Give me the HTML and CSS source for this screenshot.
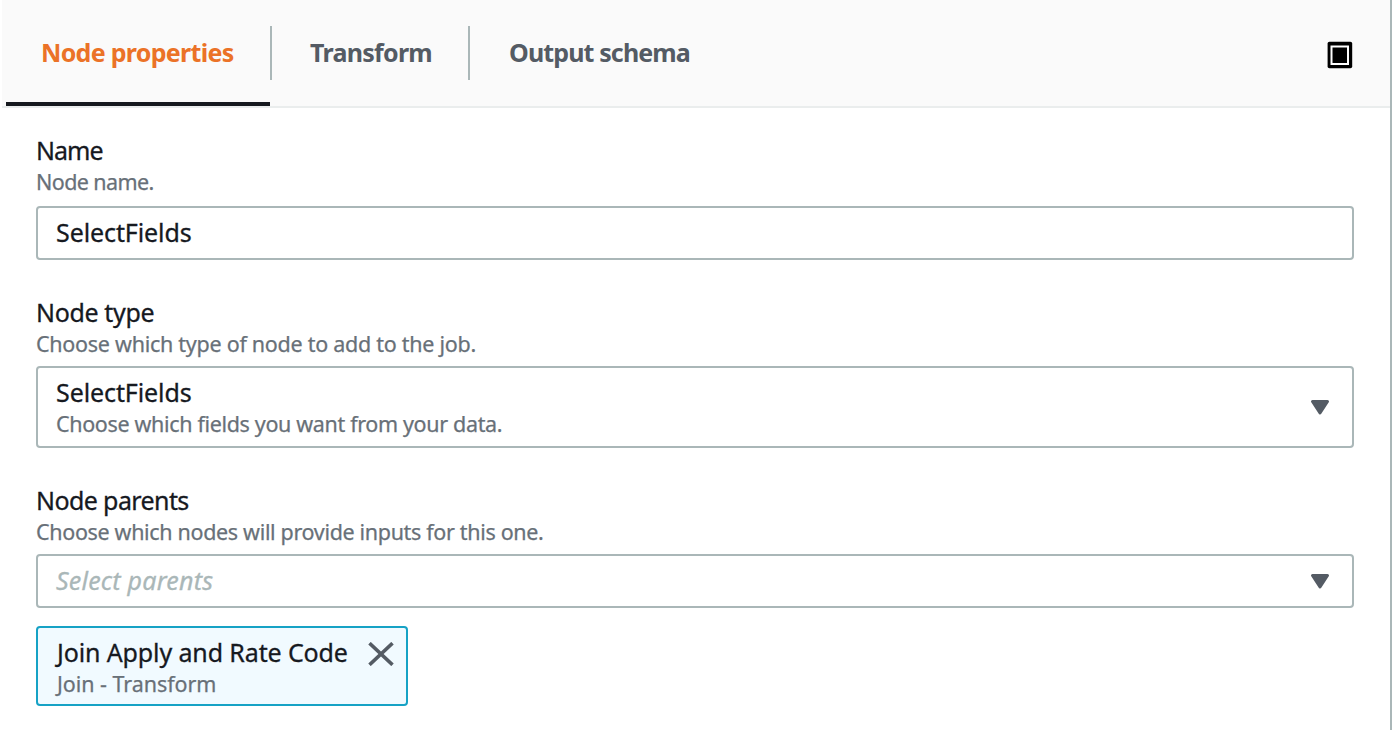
FILE: index.html
```html
<!DOCTYPE html>
<html lang="en">
<head>
<meta charset="utf-8">
<title>Node properties</title>
<link rel="stylesheet" href="styles.css">
</head>
<body>
<main class="panel">
  <header class="tabs">
    <nav class="tab-list">
      <a class="tab tab-active"><span class="tab-text t-props">Node properties</span></a>
      <a class="tab"><span class="tab-text t-transform">Transform</span></a>
      <a class="tab"><span class="tab-text t-schema">Output schema</span></a>
    </nav>
    <svg class="expand" width="26" height="28" viewBox="0 0 26 28">
      <rect x="0.6" y="0.8" width="24.6" height="26.4" rx="1.8" fill="#000"/>
      <rect x="4.5" y="5.5" width="16.5" height="17.5" fill="none" stroke="#fff" stroke-width="2"/>
    </svg>
  </header>
  <section class="form">
    <div class="field field-name">
      <div class="label l-name">Name</div>
      <div class="hint h-name">Node name.</div>
      <div class="box"><span class="value v-select">SelectFields</span></div>
    </div>
    <div class="field">
      <div class="label l-type">Node type</div>
      <div class="hint h-type">Choose which type of node to add to the job.</div>
      <div class="box box-tall">
        <div>
          <div class="value v-select">SelectFields</div>
          <div class="hint h-fields">Choose which fields you want from your data.</div>
        </div>
        <svg class="caret" width="20" height="18" viewBox="0 0 20 18"><path d="M2.5 3.5H17.5L10 15Z" fill="#545b64" stroke="#545b64" stroke-width="3" stroke-linejoin="round"/></svg>
      </div>
    </div>
    <div class="field">
      <div class="label l-parents">Node parents</div>
      <div class="hint h-parents">Choose which nodes will provide inputs for this one.</div>
      <div class="box">
        <span class="value placeholder">Select parents</span>
        <svg class="caret" width="20" height="18" viewBox="0 0 20 18"><path d="M2.5 3.5H17.5L10 15Z" fill="#545b64" stroke="#545b64" stroke-width="3" stroke-linejoin="round"/></svg>
      </div>
      <div class="token">
        <div>
          <div class="value v-join">Join Apply and Rate Code</div>
          <div class="hint h-join">Join - Transform</div>
        </div>
        <svg class="close" width="26" height="24" viewBox="0 0 26 24"><path d="M1.5 1.2L24.5 22.8M24.5 1.2L1.5 22.8" fill="none" stroke="#545b64" stroke-width="3.6"/></svg>
      </div>
    </div>
  </section>
</main>
</body>
</html>
```

FILE: styles.css
```css
* { box-sizing: border-box; }
body {
  margin: 0;
  height: 730px;
  overflow: hidden;
  background: #fff;
  font-family: "Noto Sans", "Open Sans", sans-serif;
  color: #16191f;
}
.panel {
  width: 1390px;
  height: 730px;
  margin-left: 2px;
  border-right: 2px solid #aab7b8;
}
.tabs {
  display: flex;
  justify-content: space-between;
  height: 108px;
  background: #fafafa;
  border-bottom: 2px solid #eaeded;
}
.tab-list { display: flex; padding-left: 4px; }
.tab {
  display: flex;
  height: 106px;
  padding-top: 26px;
  color: #545b64;
  font-size: 25px;
  font-weight: 700;
}
.tab-text {
  height: 54px;
  line-height: 52px;
  padding-left: 39px;
  white-space: nowrap;
  border-right: 2px solid #aab7b8;
}
.tab:last-child .tab-text { border-right: 0; }
.tab-active { width: 264px; color: #eb7227; border-bottom: 4px solid #16191f; }
.t-props { width: 266px; flex: none; padding-left: 35px; letter-spacing: -0.7px; }
.t-transform { width: 200px; padding-left: 40px; letter-spacing: -0.72px; }
.t-schema { letter-spacing: -0.87px; }
.expand { margin: 41px 37px 0 0; }
.form { padding: 26px 36px 0 34px; }
.field { margin-bottom: 36px; }
.label, .value {
  font-size: 25px;
  line-height: 32px;
  white-space: nowrap;
  -webkit-text-stroke: 0.3px currentColor;
}
.label { margin-bottom: 1px; }
.hint {
  font-size: 21.5px;
  line-height: 30px;
  color: #687078;
  white-space: nowrap;
  -webkit-text-stroke: 0.25px currentColor;
}
.l-name { letter-spacing: -1px; }
.h-name { letter-spacing: -0.6px; }
.v-select { letter-spacing: -0.1px; }
.l-type { letter-spacing: -0.35px; }
.h-type { letter-spacing: -0.27px; }
.h-fields { margin-top: 1px; letter-spacing: -0.34px; }
.l-parents { letter-spacing: -0.6px; }
.h-parents { letter-spacing: -0.33px; }
.v-join { padding-left: 1px; letter-spacing: -0.12px; }
.h-join { margin-top: 1px; padding-left: 1px; letter-spacing: -0.05px; }
.box {
  display: flex;
  align-items: center;
  justify-content: space-between;
  height: 54px;
  margin-top: 7px;
  padding: 0 22px 0 18px;
  border: 2px solid #aab7b8;
  border-radius: 4px;
}
.box > .value { padding-bottom: 2px; }
.field-name .box { margin-top: 9px; }
.box-tall { height: 82px; }
.placeholder { color: #aab7b8; font-style: italic; letter-spacing: 0.2px; }
.token {
  display: flex;
  align-items: flex-start;
  justify-content: space-between;
  width: 372px;
  height: 80px;
  margin-top: 18px;
  padding: 8px 12px 0 18px;
  background: #f1faff;
  border: 2px solid #16a2c5;
  border-radius: 4px;
}
.close { margin-top: 6px; }
```
